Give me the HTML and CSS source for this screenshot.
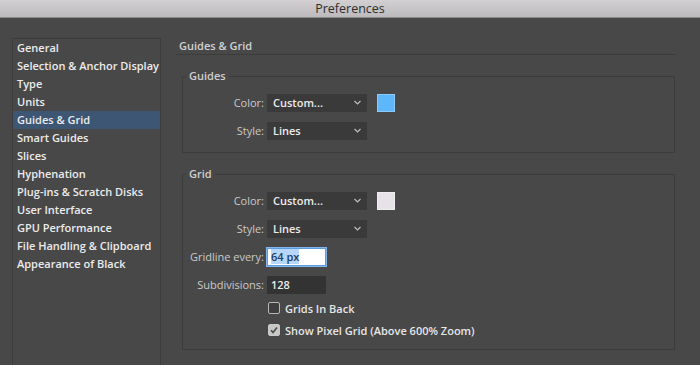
FILE: index.html
```html
<!DOCTYPE html>
<html>

<head>
  <title>Preferences</title>
  <link rel="stylesheet" href="styles.css">
</head>

<body>
  <div class="titlebar">Preferences</div>

  <div class="window">
    <ul class="sidebar">
      <li>General</li>
      <li>Selection &amp; Anchor Display</li>
      <li>Type</li>
      <li>Units</li>
      <li class="selected">Guides &amp; Grid</li>
      <li>Smart Guides</li>
      <li>Slices</li>
      <li>Hyphenation</li>
      <li>Plug-ins &amp; Scratch Disks</li>
      <li>User Interface</li>
      <li>GPU Performance</li>
      <li>File Handling &amp; Clipboard</li>
      <li>Appearance of Black</li>
    </ul>

    <div class="panel">
      <div class="panel-title">Guides &amp; Grid</div>

      <fieldset class="group">
        <legend>Guides</legend>
        <div class="form">
          <label class="field-label">Color:</label>
          <div class="control">
            <div class="dropdown">Custom...
              <svg class="chevron" width="7" height="5" viewBox="0 0 7 5"><polyline points="0.5,1 3.5,4 6.5,1" /></svg>
            </div>
            <div class="swatch swatch-blue"></div>
          </div>

          <label class="field-label">Style:</label>
          <div class="control">
            <div class="dropdown">Lines
              <svg class="chevron" width="7" height="5" viewBox="0 0 7 5"><polyline points="0.5,1 3.5,4 6.5,1" /></svg>
            </div>
          </div>
        </div>
      </fieldset>

      <fieldset class="group">
        <legend>Grid</legend>
        <div class="form">
          <label class="field-label">Color:</label>
          <div class="control">
            <div class="dropdown">Custom...
              <svg class="chevron" width="7" height="5" viewBox="0 0 7 5"><polyline points="0.5,1 3.5,4 6.5,1" /></svg>
            </div>
            <div class="swatch swatch-light"></div>
          </div>

          <label class="field-label">Style:</label>
          <div class="control">
            <div class="dropdown">Lines
              <svg class="chevron" width="7" height="5" viewBox="0 0 7 5"><polyline points="0.5,1 3.5,4 6.5,1" /></svg>
            </div>
          </div>

          <label class="field-label">Gridline every:</label>
          <div class="control">
            <div class="textbox focused"><span class="sel">64 px</span></div>
          </div>

          <label class="field-label">Subdivisions:</label>
          <div class="control">
            <div class="textbox">128</div>
          </div>

          <div class="checks">
            <div class="check"><span class="box"></span>Grids In Back</div>
            <div class="check"><span class="box checked">
                <svg width="12" height="12" viewBox="0 0 12 12"><polyline points="3,6.2 5,8.4 9,3.4" /></svg>
              </span>Show Pixel Grid (Above 600% Zoom)</div>
          </div>
        </div>
      </fieldset>
    </div>
  </div>
</body>

</html>
```

FILE: styles.css
```css
body {
  margin: 0;
  height: 365px;
  overflow: hidden;
  background-color: #484848;
  font-family: "Open Sans", "DejaVu Sans", sans-serif;
  font-size: 11px;
  color: #e6e6e6;
}

/* --- Title bar --- */
.titlebar {
  height: 17px;
  line-height: 17px;
  text-align: center;
  font-size: 12.5px;
  color: #2e2e2e;
  background: linear-gradient(#d2d0d2, #bcbabc);
  border-bottom: 1px solid #8c8c8c;
}

.window {
  display: flex;
  padding: 20px 24px 0 12px;
  gap: 15px;
}

/* --- Sidebar (runs off the bottom edge) --- */
.sidebar {
  list-style: none;
  margin: 0;
  padding: 0;
  width: 147px;
  height: 326px;
  border: 1px solid #3d3d3d;
  border-bottom: none;
  flex-shrink: 0;
}

.sidebar li {
  height: 18px;
  line-height: 18px;
  padding-left: 4px;
  font-weight: 600;
  white-space: nowrap;
  color: #ececec;
}

.sidebar li.selected {
  background-color: #3d5674;
}

/* --- Panel --- */
.panel {
  flex: 1;
}

.panel-title {
  height: 16px;
  line-height: 16px;
  padding-left: 3px;
  color: #d2d2d2;
  font-weight: 600;
  border-bottom: 1px solid #3c3c3c;
  margin-bottom: 13px;
}

.group {
  margin: 0 1px 13px 6px;
  padding: 10px 0 12px 0;
  border: 1px solid #3c3c3c;
  min-width: 0;
}

.group legend {
  padding: 0 3px;
  margin-left: 3px;
  line-height: 16px;
  font-weight: 600;
  color: #cfcfcf;
}

.form {
  display: grid;
  grid-template-columns: 81px 1fr;
  column-gap: 3px;
  row-gap: 10px;
}

.field-label {
  text-align: right;
  line-height: 18px;
  color: #cacaca;
  white-space: nowrap;
}

.control {
  display: flex;
  gap: 10px;
  height: 18px;
}

.dropdown {
  position: relative;
  width: 94px;
  height: 18px;
  line-height: 18px;
  padding-left: 6px;
  background-color: #3a3a3a;
  color: #ececec;
  font-weight: 600;
}

.chevron {
  position: absolute;
  right: 6px;
  top: 6px;
  fill: none;
  stroke: #bdbdbd;
  stroke-width: 1.2;
}

.swatch {
  width: 16px;
  height: 16px;
  border: 1px solid #d8d8d8;
}

.swatch-blue {
  background-color: #5eb6fb;
  border-color: #8ccafa;
}

.swatch-light {
  background-color: #e7e2e8;
  border-color: #f0edf0;
}

.textbox {
  width: 55px;
  height: 18px;
  line-height: 18px;
  padding-left: 4px;
  background-color: #333333;
  color: #ececec;
  font-weight: 600;
}

.textbox.focused {
  width: 54px;
  height: 16px;
  line-height: 16px;
  padding-left: 3px;
  background-color: #ffffff;
  border: 1px solid #5b9be0;
  box-shadow: 0 0 0 1px #83b6ec;
  color: #1c3d66;
}

.sel {
  background-color: #b7d6fb;
}

/* --- Checkboxes --- */
.checks {
  grid-column: 2;
  display: flex;
  flex-direction: column;
  gap: 8px;
  margin-top: -3px;
}

.check {
  display: flex;
  align-items: center;
  gap: 5px;
  height: 14px;
  margin-left: 1px;
  font-weight: 600;
  color: #e6e6e6;
}

.box {
  width: 10px;
  height: 10px;
  border: 1px solid #b8b8b8;
  border-radius: 2px;
  background-color: #3e3e3e;
  display: flex;
}

.box.checked {
  background-color: #c8c8c8;
  border-color: #c8c8c8;
}

.box svg {
  margin: -1px;
  fill: none;
  stroke: #4a4a4a;
  stroke-width: 1.6;
}
```
